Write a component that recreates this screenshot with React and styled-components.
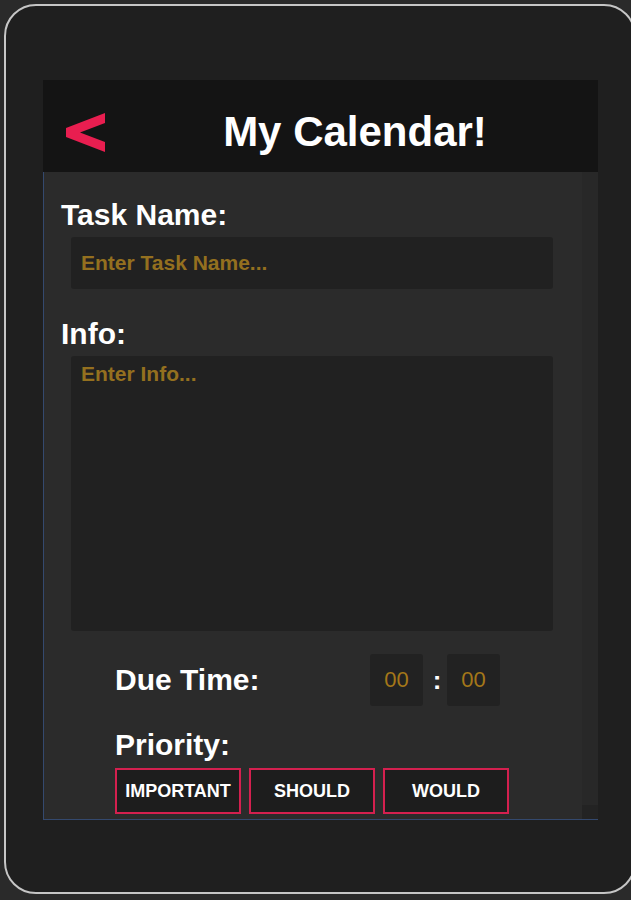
import React from 'react';
import styled, { createGlobalStyle } from 'styled-components';

const GlobalStyle = createGlobalStyle`
  html, body {
    margin: 0;
    padding: 0;
    background: #2a2a2a;
    overflow: hidden;
    font-family: "Liberation Sans", Arial, sans-serif;
  }
`;

const Frame = styled.div`
  box-sizing: border-box;
  margin: 4px 0 0 4px;
  width: 632px;
  height: 890px;
  border: 2px solid #c6c6c6;
  border-radius: 32px;
  background: #1f1f1f;
  padding: 74px 0 0 37px;
`;

const Screen = styled.div`
  width: 555px;
`;

const Header = styled.div`
  height: 92px;
  background: #141414;
  display: flex;
  align-items: flex-start;
`;

const BackButton = styled.button`
  width: 69px;
  padding: 33px 0 0 23px;
  border: none;
  background: none;
  display: flex;
  cursor: pointer;
`;

const Title = styled.h1`
  flex: 1;
  margin: 28px 0 0;
  text-align: center;
  color: #fff;
  font-size: 42px;
  line-height: 48px;
  font-weight: bold;
`;

const Panel = styled.div`
  box-sizing: border-box;
  height: 648px;
  background: #2b2b2b;
  border-left: 1px solid #34496e;
  border-bottom: 1px solid #34496e;
  display: flex;
  overflow: hidden;
`;

const Content = styled.div`
  flex: 1;
  padding: 26px 0 0 17px;
`;

const ScrollTrack = styled.div`
  width: 16px;
  background: #282828;
  display: flex;
  flex-direction: column;
  justify-content: flex-end;
`;

const ScrollThumb = styled.div`
  height: 14px;
  background: #232323;
`;

const Label = styled.div`
  color: #fff;
  font-size: 30px;
  line-height: 34px;
  font-weight: bold;
  margin-top: ${(p) => p.$top || 0}px;
  padding-left: ${(p) => p.$indent || 0}px;
`;

const TextInput = styled.input`
  box-sizing: border-box;
  display: block;
  margin: 5px 0 0 10px;
  width: 482px;
  height: 52px;
  padding: 0 10px;
  border: none;
  border-radius: 3px;
  background: #212121;
  color: #ddd;
  font-family: inherit;
  font-size: 21px;
  font-weight: bold;
  outline: none;
  &::placeholder {
    color: #94701f;
  }
`;

const TextArea = styled.textarea`
  box-sizing: border-box;
  display: block;
  margin: 5px 0 0 10px;
  width: 482px;
  height: 275px;
  padding: 6px 10px;
  border: none;
  border-radius: 3px;
  background: #212121;
  color: #ddd;
  font-family: inherit;
  font-size: 21px;
  line-height: 24px;
  font-weight: bold;
  resize: none;
  outline: none;
  &::placeholder {
    color: #94701f;
  }
`;

const DueRow = styled.div`
  margin-top: 23px;
  padding-left: 54px;
  height: 52px;
  display: flex;
  align-items: center;
`;

const DueLabel = styled(Label)`
  width: 255px;
`;

const TimeBox = styled.div`
  width: 53px;
  height: 52px;
  border-radius: 3px;
  background: #222;
  color: #a47719;
  font-size: 22px;
  display: flex;
  align-items: center;
  justify-content: center;
`;

const Colon = styled.span`
  width: 24px;
  padding-left: 4px;
  box-sizing: border-box;
  text-align: center;
  color: #fff;
  font-size: 26px;
  font-weight: bold;
`;

const PriorityRow = styled.div`
  margin-top: 6px;
  padding-left: 54px;
  display: flex;
  gap: 8px;
`;

const PriorityButton = styled.button`
  box-sizing: border-box;
  width: 126px;
  height: 46px;
  border: 2px solid #d4204f;
  background: #1d1d1d;
  color: #fff;
  font-family: inherit;
  font-size: 18px;
  font-weight: bold;
  padding: 0;
  cursor: pointer;
`;

function BackIcon() {
  return (
    <svg width="39" height="39" viewBox="0 0 39 39">
      <polygon points="39,0 39,10 14,19.5 39,29 39,39 0,24 0,15" fill="#e91e50" />
    </svg>
  );
}

export default function App() {
  return (
    <>
      <GlobalStyle />
      <Frame>
        <Screen>
          <Header>
            <BackButton aria-label="Back">
              <BackIcon />
            </BackButton>
            <Title>My Calendar!</Title>
          </Header>
          <Panel>
            <Content>
              <Label>Task Name:</Label>
              <TextInput placeholder="Enter Task Name..." />
              <Label $top={28}>Info:</Label>
              <TextArea placeholder="Enter Info..." />
              <DueRow>
                <DueLabel>Due Time:</DueLabel>
                <TimeBox>00</TimeBox>
                <Colon>:</Colon>
                <TimeBox>00</TimeBox>
              </DueRow>
              <Label $top={22} $indent={54}>Priority:</Label>
              <PriorityRow>
                <PriorityButton>IMPORTANT</PriorityButton>
                <PriorityButton>SHOULD</PriorityButton>
                <PriorityButton>WOULD</PriorityButton>
              </PriorityRow>
            </Content>
            <ScrollTrack>
              <ScrollThumb />
            </ScrollTrack>
          </Panel>
        </Screen>
      </Frame>
    </>
  );
}
